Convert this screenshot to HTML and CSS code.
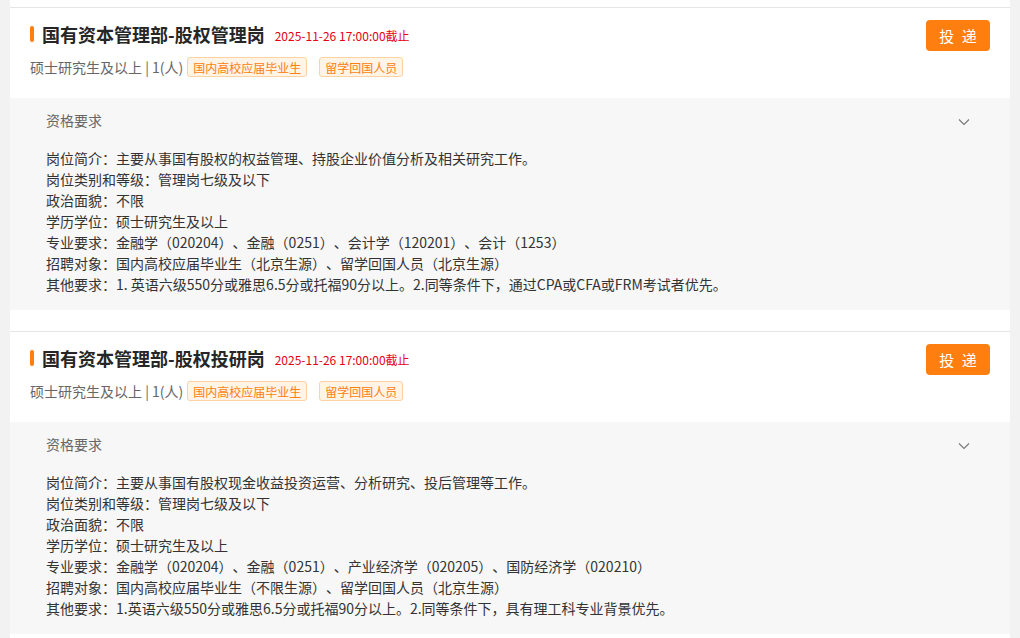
FILE: index.html
```html
<!DOCTYPE html>
<html lang="zh-CN">
<head>
<meta charset="utf-8">
<title>岗位列表</title>
<link rel="stylesheet" href="styles.css">
</head>
<body>
<div class="page">
  <div class="list">
    <div class="list-top"></div>

    <div class="job">
      <div class="job-head">
        <div class="job-info">
          <div class="job-title-row">
            <span class="job-bar"></span>
            <span class="job-title">国有资本管理部-股权管理岗</span>
            <span class="job-deadline">2025-11-26 17:00:00截止</span>
          </div>
          <div class="job-meta">
            <span class="job-edu">硕士研究生及以上 | 1(人)</span>
            <span class="tag">国内高校应届毕业生</span>
            <span class="tag">留学回国人员</span>
          </div>
        </div>
        <button class="apply-btn">投 递</button>
      </div>
      <div class="req">
        <div class="req-head">
          <span class="req-label">资格要求</span>
          <svg class="chevron" width="12" height="8" viewBox="0 0 12 8"><path d="M1 1.5 L6 6.5 L11 1.5" fill="none" stroke="#777" stroke-width="1.1"/></svg>
        </div>
        <div class="req-body">
          <p>岗位简介：主要从事国有股权的权益管理、持股企业价值分析及相关研究工作。</p>
          <p>岗位类别和等级：管理岗七级及以下</p>
          <p>政治面貌：不限</p>
          <p>学历学位：硕士研究生及以上</p>
          <p>专业要求：金融学（020204）、金融（0251）、会计学（120201）、会计（1253）</p>
          <p>招聘对象：国内高校应届毕业生（北京生源）、留学回国人员（北京生源）</p>
          <p>其他要求：1. 英语六级550分或雅思6.5分或托福90分以上。2.同等条件下，通过CPA或CFA或FRM考试者优先。</p>
        </div>
      </div>
    </div>

    <div class="job">
      <div class="job-head">
        <div class="job-info">
          <div class="job-title-row">
            <span class="job-bar"></span>
            <span class="job-title">国有资本管理部-股权投研岗</span>
            <span class="job-deadline">2025-11-26 17:00:00截止</span>
          </div>
          <div class="job-meta">
            <span class="job-edu">硕士研究生及以上 | 1(人)</span>
            <span class="tag">国内高校应届毕业生</span>
            <span class="tag">留学回国人员</span>
          </div>
        </div>
        <button class="apply-btn">投 递</button>
      </div>
      <div class="req">
        <div class="req-head">
          <span class="req-label">资格要求</span>
          <svg class="chevron" width="12" height="8" viewBox="0 0 12 8"><path d="M1 1.5 L6 6.5 L11 1.5" fill="none" stroke="#777" stroke-width="1.1"/></svg>
        </div>
        <div class="req-body">
          <p>岗位简介：主要从事国有股权现金收益投资运营、分析研究、投后管理等工作。</p>
          <p>岗位类别和等级：管理岗七级及以下</p>
          <p>政治面貌：不限</p>
          <p>学历学位：硕士研究生及以上</p>
          <p>专业要求：金融学（020204）、金融（0251）、产业经济学（020205）、国防经济学（020210）</p>
          <p>招聘对象：国内高校应届毕业生（不限生源）、留学回国人员（北京生源）</p>
          <p>其他要求：1.英语六级550分或雅思6.5分或托福90分以上。2.同等条件下，具有理工科专业背景优先。</p>
        </div>
      </div>
    </div>
  </div>
</div>
</body>
</html>
```

FILE: styles.css
```css
* {
  box-sizing: border-box;
}

html, body {
  margin: 0;
  padding: 0;
}

body {
  background: #f2f2f2;
  font-family: "Microsoft YaHei", "Noto Sans CJK SC", "Noto Sans", sans-serif;
  color: #333;
  text-spacing-trim: space-all;
}

.page {
  padding: 0 10px;
}

.list {
  background: #fff;
}

.list-top {
  height: 7px;
}

.job {
  border-top: 1px solid #e6e6e6;
  padding-bottom: 21px;
}

.job-head {
  display: flex;
  justify-content: space-between;
  align-items: flex-start;
  padding: 12px 20px 21px 20px;
}

.job-title-row {
  display: flex;
  align-items: center;
  height: 28px;
}

.job-bar {
  width: 4px;
  height: 16px;
  border-radius: 2px;
  background: #ff7e10;
  margin-right: 8px;
}

.job-title {
  font-size: 18px;
  font-weight: bold;
  color: #262626;
}

.job-deadline {
  font-size: 12px;
  color: #e60012;
  margin-left: 10px;
  margin-top: 2px;
}

.job-meta {
  display: flex;
  align-items: center;
  margin-top: 9px;
  height: 20px;
}

.job-edu {
  font-size: 14px;
  color: #666;
  margin-right: 4px;
  margin-top: -1px;
}

.tag {
  display: inline-flex;
  align-items: center;
  height: 20px;
  padding: 0 5px;
  font-size: 12px;
  color: #ff7e10;
  background: #fff4e6;
  border: 1px solid #ffd3a1;
  border-radius: 3px;
  margin-right: 12px;
}

.apply-btn {
  width: 64px;
  height: 31px;
  border: none;
  border-radius: 4px;
  background: #ff7e10;
  color: #fff;
  font-family: inherit;
  font-size: 15px;
  letter-spacing: 2px;
  padding: 0 0 0 2px;
  cursor: pointer;
}

.req {
  background: #f7f7f7;
  padding: 12px 40px 15px 36px;
}

.req-head {
  display: flex;
  justify-content: space-between;
  align-items: center;
  height: 20px;
}

.req-label {
  font-size: 14px;
  color: #666;
}

.chevron {
  display: block;
  margin-top: 3px;
}

.req-body {
  margin-top: 18px;
  font-size: 14px;
  line-height: 21px;
  color: #333;
}

.req-body p {
  margin: 0;
}
```
